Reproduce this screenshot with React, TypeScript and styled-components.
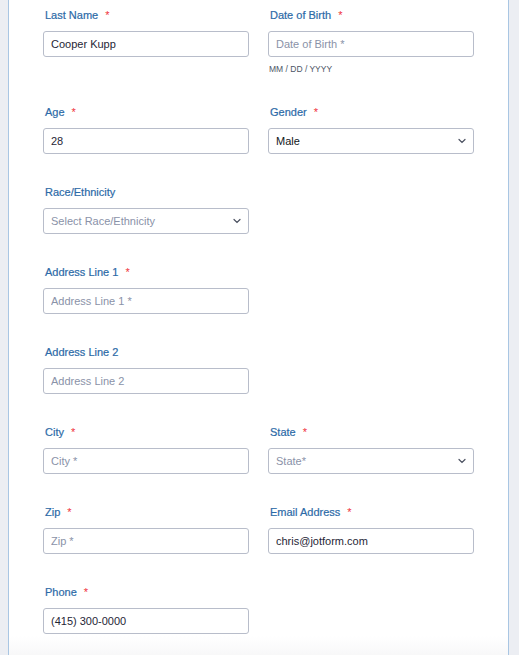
import React from "react";
import styled, { createGlobalStyle } from "styled-components";

const GlobalStyle = createGlobalStyle`
  html, body {
    margin: 0;
    padding: 0;
    background: #eceef3;
    font-family: "Liberation Sans", Arial, sans-serif;
  }
`;

const Page = styled.div`
  padding: 0 10px 0 8px;
  height: 655px;
  overflow: hidden;
`;

const Card = styled.form`
  background: linear-gradient(to bottom, #ffffff 0, #ffffff 636px, #f6f6f7 660px);
  border-left: 1px solid #a9c6e3;
  border-right: 1px solid #a9c6e3;
  height: 700px;
  padding: 8px 0 0 34px;
  box-sizing: border-box;
`;

const Grid = styled.div`
  display: grid;
  grid-template-columns: 206px 206px;
  column-gap: 19px;
  row-gap: 31px;
`;

const Field = styled.div<{ $col?: number }>`
  display: flex;
  flex-direction: column;
  grid-column: ${(p) => (p.$col ? p.$col : "auto")};
`;

const Label = styled.label`
  font-size: 11px;
  line-height: 14px;
  color: #2c6aa7;
  padding-left: 2px;
  margin-bottom: 9px;
  -webkit-text-stroke: 0.2px #2c6aa7;
`;

const Req = styled.span`
  color: #f0323c;
  margin-left: 7px;
  -webkit-text-stroke: 0;
`;

const TextInput = styled.input`
  box-sizing: border-box;
  width: 206px;
  height: 26px;
  border: 1px solid #b8bdca;
  border-radius: 3px;
  padding: 0 7px;
  font-family: inherit;
  font-size: 11px;
  color: #1f2636;
  background: #fff;
  outline: none;

  &::placeholder {
    color: #8a92a8;
  }
`;

const SelectWrap = styled.div`
  position: relative;
  width: 206px;
`;

const Select = styled.select<{ $empty?: boolean }>`
  box-sizing: border-box;
  width: 206px;
  height: 26px;
  border: 1px solid #b8bdca;
  border-radius: 3px;
  padding: 0 22px 0 7px;
  font-family: inherit;
  font-size: 11px;
  color: ${(p) => (p.$empty ? "#8a92a8" : "#111722")};
  background: #fff;
  appearance: none;
  outline: none;
`;

const Chevron = styled.svg`
  position: absolute;
  right: 8px;
  top: 10px;
  width: 8px;
  height: 6px;
  pointer-events: none;
`;

const SubLabel = styled.span`
  font-size: 8.5px;
  line-height: 10px;
  color: #4d5566;
  margin-top: 7px;
  padding-left: 1px;
`;

const Dropdown = ({ value, options, empty }: { value: string; options: string[]; empty?: boolean }) => (
  <SelectWrap>
    <Select defaultValue={value} $empty={empty}>
      {options.map((o) => (
        <option key={o}>{o}</option>
      ))}
    </Select>
    <Chevron viewBox="0 0 8 6">
      <path d="M1 1.5 L4 4.5 L7 1.5" fill="none" stroke="#4a5060" strokeWidth="1.2" strokeLinecap="round" />
    </Chevron>
  </SelectWrap>
);

const App = () => {
  return (
    <Page>
      <GlobalStyle />
      <Card>
        <Grid>
          <Field>
            <Label>Last Name<Req>*</Req></Label>
            <TextInput defaultValue="Cooper Kupp" />
          </Field>
          <Field>
            <Label>Date of Birth<Req>*</Req></Label>
            <TextInput placeholder="Date of Birth *" />
            <SubLabel>MM / DD / YYYY</SubLabel>
          </Field>

          <Field $col={1}>
            <Label>Age<Req>*</Req></Label>
            <TextInput defaultValue="28" />
          </Field>
          <Field $col={2}>
            <Label>Gender<Req>*</Req></Label>
            <Dropdown value="Male" options={["Male", "Female", "Other"]} />
          </Field>

          <Field $col={1}>
            <Label>Race/Ethnicity</Label>
            <Dropdown value="Select Race/Ethnicity" options={["Select Race/Ethnicity"]} empty />
          </Field>

          <Field $col={1}>
            <Label>Address Line 1<Req>*</Req></Label>
            <TextInput placeholder="Address Line 1 *" />
          </Field>

          <Field $col={1}>
            <Label>Address Line 2</Label>
            <TextInput placeholder="Address Line 2" />
          </Field>

          <Field $col={1}>
            <Label>City<Req>*</Req></Label>
            <TextInput placeholder="City *" />
          </Field>
          <Field $col={2}>
            <Label>State<Req>*</Req></Label>
            <Dropdown value="State*" options={["State*"]} empty />
          </Field>

          <Field $col={1}>
            <Label>Zip<Req>*</Req></Label>
            <TextInput placeholder="Zip *" />
          </Field>
          <Field $col={2}>
            <Label>Email Address<Req>*</Req></Label>
            <TextInput defaultValue="chris@jotform.com" />
          </Field>

          <Field $col={1}>
            <Label>Phone<Req>*</Req></Label>
            <TextInput defaultValue="(415) 300-0000" />
          </Field>
        </Grid>
      </Card>
    </Page>
  );
};

export default App;
